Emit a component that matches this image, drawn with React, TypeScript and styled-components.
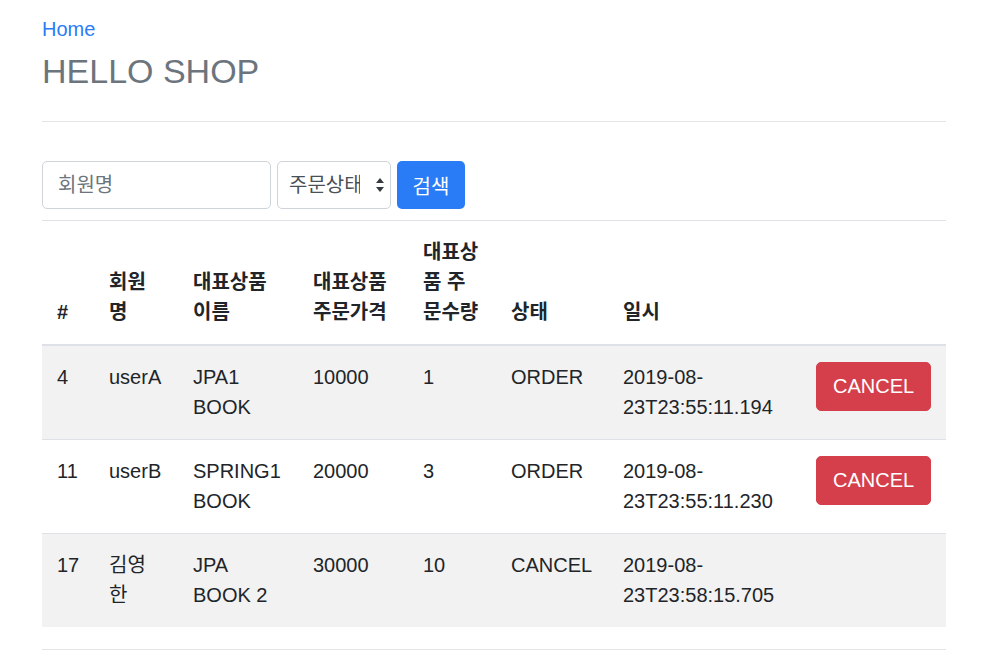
import React from 'react';
import styled, { createGlobalStyle } from 'styled-components';

interface Order {
  id: number;
  member: string;
  itemName: string;
  price: number;
  count: number;
  status: 'ORDER' | 'CANCEL';
  orderDate: string;
}

const orders: Order[] = [
  { id: 4, member: 'userA', itemName: 'JPA1 BOOK', price: 10000, count: 1, status: 'ORDER', orderDate: '2019-08-23T23:55:11.194' },
  { id: 11, member: 'userB', itemName: 'SPRING1 BOOK', price: 20000, count: 3, status: 'ORDER', orderDate: '2019-08-23T23:55:11.230' },
  { id: 17, member: '김영한', itemName: 'JPA BOOK 2', price: 30000, count: 10, status: 'CANCEL', orderDate: '2019-08-23T23:58:15.705' },
];

// outer widths of each column, padding included
const columns = [
  { label: '#', width: 52 },
  { label: '회원명', width: 84 },
  { label: '대표상품 이름', width: 120 },
  { label: '대표상품 주문가격', width: 110 },
  { label: '대표상품 주문수량', width: 88 },
  { label: '상태', width: 112 },
  { label: '일시', width: 193 },
  { label: '', width: 145 },
];

const GlobalStyle = createGlobalStyle`
  body {
    margin: 0;
    background: #fff;
    color: #212529;
    font-family: "Liberation Sans", "Noto Sans CJK KR", sans-serif;
    font-size: 20px;
    line-height: 1.5;
  }
`;

const Page = styled.div`
  width: 904px;
  margin-left: 42px;
  padding-top: 14px;
`;

const Header = styled.header`
  padding-bottom: 29px;
  border-bottom: 1px solid #e5e5e5;
`;

const HomeLink = styled.a`
  display: block;
  color: #2a7cf6;
  text-decoration: none;
  line-height: 30px;
`;

const Title = styled.h3`
  margin: 6px 0 0;
  font-size: 34px;
  line-height: 42px;
  font-weight: 500;
  color: #6c757d;
`;

const SearchForm = styled.form`
  display: flex;
  gap: 6px;
  margin-top: 39px;
`;

const TextInput = styled.input`
  box-sizing: border-box;
  width: 229px;
  height: 48px;
  padding: 0 15px;
  border: 1px solid #ced4da;
  border-radius: 5px;
  font-family: inherit;
  font-size: 20px;
  color: #495057;

  &::placeholder {
    color: #6c757d;
  }
`;

const SelectWrap = styled.div`
  position: relative;
  width: 114px;
`;

const Select = styled.select`
  box-sizing: border-box;
  width: 100%;
  height: 48px;
  padding: 0 30px 0 11px;
  border: 1px solid #ced4da;
  border-radius: 5px;
  background: #fff;
  appearance: none;
  font-family: inherit;
  font-size: 20px;
  color: #495057;
`;

const Caret = styled.svg`
  position: absolute;
  right: 7px;
  top: 17px;
  pointer-events: none;
`;

const SearchButton = styled.button`
  width: 68px;
  height: 48px;
  border: none;
  border-radius: 5px;
  background: #2a7cf6;
  color: #fff;
  font-family: inherit;
  font-size: 20px;
`;

const Table = styled.table`
  width: 100%;
  margin-top: 11px;
  border-collapse: collapse;
  table-layout: fixed;
`;

const Th = styled.th<{ $w: number }>`
  width: ${({ $w }) => $w - 30}px;
  padding: 16px 15px 17px;
  text-align: left;
  vertical-align: bottom;
  font-weight: bold;
  line-height: 30px;
  border-top: 1px solid #dee2e6;
  border-bottom: 2px solid #dee2e6;
`;

const Row = styled.tr<{ $striped: boolean }>`
  background: ${({ $striped }) => ($striped ? '#f2f2f2' : 'transparent')};
`;

const Td = styled.td`
  padding: 16px 15px 17px;
  vertical-align: top;
  line-height: 30px;
  border-top: 1px solid #dee2e6;
`;

const CancelButton = styled.button`
  height: 49px;
  padding: 0 16px;
  border: 1px solid #d43f4b;
  border-radius: 5px;
  background: #d43f4b;
  color: #fff;
  font-family: inherit;
  font-size: 20px;
`;

const Footer = styled.footer`
  margin-top: 22px;
  border-top: 1px solid #e5e5e5;
  height: 20px;
`;

export default function App() {
  return (
    <>
      <GlobalStyle />
      <Page>
        <Header>
          <HomeLink href="#">Home</HomeLink>
          <Title>HELLO SHOP</Title>
        </Header>

        <SearchForm onSubmit={(e) => e.preventDefault()}>
          <TextInput placeholder="회원명" />
          <SelectWrap>
            <Select defaultValue="">
              <option value="">주문상태</option>
              <option value="ORDER">주문</option>
              <option value="CANCEL">취소</option>
            </Select>
            <Caret width="8" height="14" viewBox="0 0 8 14">
              <path d="M4 0 L8 5 H0 Z" fill="#343a40" />
              <path d="M0 9 H8 L4 14 Z" fill="#343a40" />
            </Caret>
          </SelectWrap>
          <SearchButton type="submit">검색</SearchButton>
        </SearchForm>

        <Table>
          <thead>
            <tr>
              {columns.map((c, i) => (
                <Th key={i} $w={c.width}>{c.label}</Th>
              ))}
            </tr>
          </thead>
          <tbody>
            {orders.map((o, i) => (
              <Row key={o.id} $striped={i % 2 === 0}>
                <Td>{o.id}</Td>
                <Td>{o.member}</Td>
                <Td>{o.itemName}</Td>
                <Td>{o.price}</Td>
                <Td>{o.count}</Td>
                <Td>{o.status}</Td>
                <Td>{o.orderDate}</Td>
                <Td>{o.status === 'ORDER' && <CancelButton>CANCEL</CancelButton>}</Td>
              </Row>
            ))}
          </tbody>
        </Table>
        <Footer />
      </Page>
    </>
  );
}
